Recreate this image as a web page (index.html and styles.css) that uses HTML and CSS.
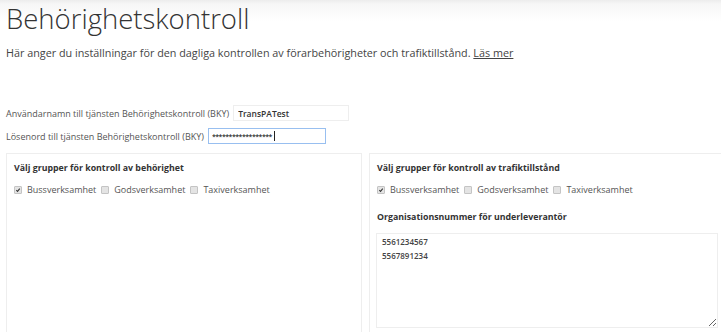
FILE: index.html
```html
<!DOCTYPE html>
<html lang="sv">

<head>
	<meta charset="UTF-8">
	<meta name="viewport" content="width=device-width, initial-scale=1.0">
	<title>Behörighetskontroll</title>
	<link rel="stylesheet" href="styles.css">
</head>

<body>
	<div class="page-header">
		<h1>Behörighetskontroll</h1>
	</div>

	<p class="intro">Här anger du inställningar för den dagliga kontrollen av förarbehörigheter och trafiktillstånd. <a href="#">Läs mer</a></p>

	<div class="credentials">
		<div class="field-row">
			<label for="user">Användarnamn till tjänsten Behörighetskontroll (BKY)</label>
			<input id="user" class="text-input user-input" type="text" value="TransPATest">
		</div>
		<div class="field-row">
			<label for="pass">Lösenord till tjänsten Behörighetskontroll (BKY)</label>
			<div class="input-wrap">
				<input id="pass" class="text-input pass-input focused" type="text" value="******************">
				<span class="caret"></span>
			</div>
		</div>
	</div>

	<div class="panels">
		<div class="panel">
			<h2>Välj grupper för kontroll av behörighet</h2>
			<div class="check-row">
				<label class="check"><span class="box checked"><svg viewBox="0 0 10 10"><path d="M2.2 5.3 L4.2 7.3 L7.9 2.8" /></svg></span>Bussverksamhet</label>
				<label class="check"><span class="box"></span>Godsverksamhet</label>
				<label class="check"><span class="box"></span>Taxiverksamhet</label>
			</div>
		</div>

		<div class="panel">
			<h2>Välj grupper för kontroll av trafiktillstånd</h2>
			<div class="check-row">
				<label class="check"><span class="box checked"><svg viewBox="0 0 10 10"><path d="M2.2 5.3 L4.2 7.3 L7.9 2.8" /></svg></span>Bussverksamhet</label>
				<label class="check"><span class="box"></span>Godsverksamhet</label>
				<label class="check"><span class="box"></span>Taxiverksamhet</label>
			</div>
			<h2 class="sub-heading">Organisationsnummer för underleverantör</h2>
			<textarea class="org-numbers">5561234567
5567891234</textarea>
		</div>
	</div>
</body>

</html>
```

FILE: styles.css
```css
html {
	overflow: hidden;
}

body {
	font-family: 'Open Sans', 'Noto Sans', sans-serif;
	color: #444444;
	background-color: #ffffff;
	margin: 0;
	padding: 0;
	width: 721px;
	height: 332px;
	overflow: hidden;
}

.page-header {
	background: linear-gradient(to bottom, #ececec 0px, #f6f6f6 4px, #ffffff 22px);
	padding: 0 6px;
	height: 44px;
}

h1 {
	margin: 0;
	font-size: 27.5px;
	font-weight: 300;
	line-height: 38px;
	color: #333333;
}

.intro {
	margin: 0;
	padding: 0 6px;
	font-size: 10.8px;
	line-height: 18px;
	color: #444444;
}

.intro a {
	color: #444444;
	text-decoration: underline;
}

.credentials {
	padding: 43px 6px 0;
}

.field-row {
	display: flex;
	align-items: center;
	gap: 4px;
	height: 16px;
	margin-bottom: 7px;
}

.field-row label {
	font-size: 9px;
	color: #555555;
}

.text-input {
	box-sizing: border-box;
	height: 16px;
	padding: 0 4px;
	border: 1px solid #eeeeee;
	font-family: 'Open Sans', sans-serif;
	font-size: 8.5px;
	font-weight: 600;
	color: #333333;
	outline: none;
}

.user-input {
	width: 116px;
}

.input-wrap {
	position: relative;
	display: flex;
}

.pass-input {
	width: 118px;
	padding: 0 3px;
	font-size: 7px;
	letter-spacing: -0.5px;
}

.caret {
	position: absolute;
	left: 66px;
	top: 3px;
	width: 1px;
	height: 10px;
	background-color: #222222;
}

.focused {
	border-color: #98bff0;
}

.panels {
	display: grid;
	grid-template-columns: 356px 356px;
	gap: 7px;
	padding: 2px 0 0 6px;
}

.panel {
	border: 1px solid #eeeeee;
	border-bottom: none;
	padding: 7px 6px 0 7px;
	height: 171px;
}

h2 {
	margin: 0;
	font-size: 8.8px;
	font-weight: 700;
	line-height: 14px;
	color: #333333;
}

.check-row {
	display: flex;
	gap: 5px;
	margin-top: 9px;
	font-size: 9px;
	color: #555555;
	line-height: 12px;
}

.check {
	display: flex;
	align-items: center;
	gap: 5px;
}

.box {
	box-sizing: border-box;
	width: 8px;
	height: 8px;
	border: 1px solid #c4c4c4;
	border-radius: 1px;
	background-color: #e4e4e4;
	display: flex;
}

.box svg {
	width: 100%;
	height: 100%;
	fill: none;
	stroke: #333333;
	stroke-width: 1.7;
}

.sub-heading {
	margin-top: 14px;
}

.org-numbers {
	display: block;
	box-sizing: border-box;
	width: 342px;
	height: 95px;
	margin-top: 9px;
	margin-left: -1px;
	padding: 1px 5px;
	border: 1px solid #eeeeee;
	font-family: 'Open Sans', sans-serif;
	font-size: 8px;
	font-weight: 600;
	line-height: 14px;
	color: #444444;
	resize: vertical;
	outline: none;
}
```
